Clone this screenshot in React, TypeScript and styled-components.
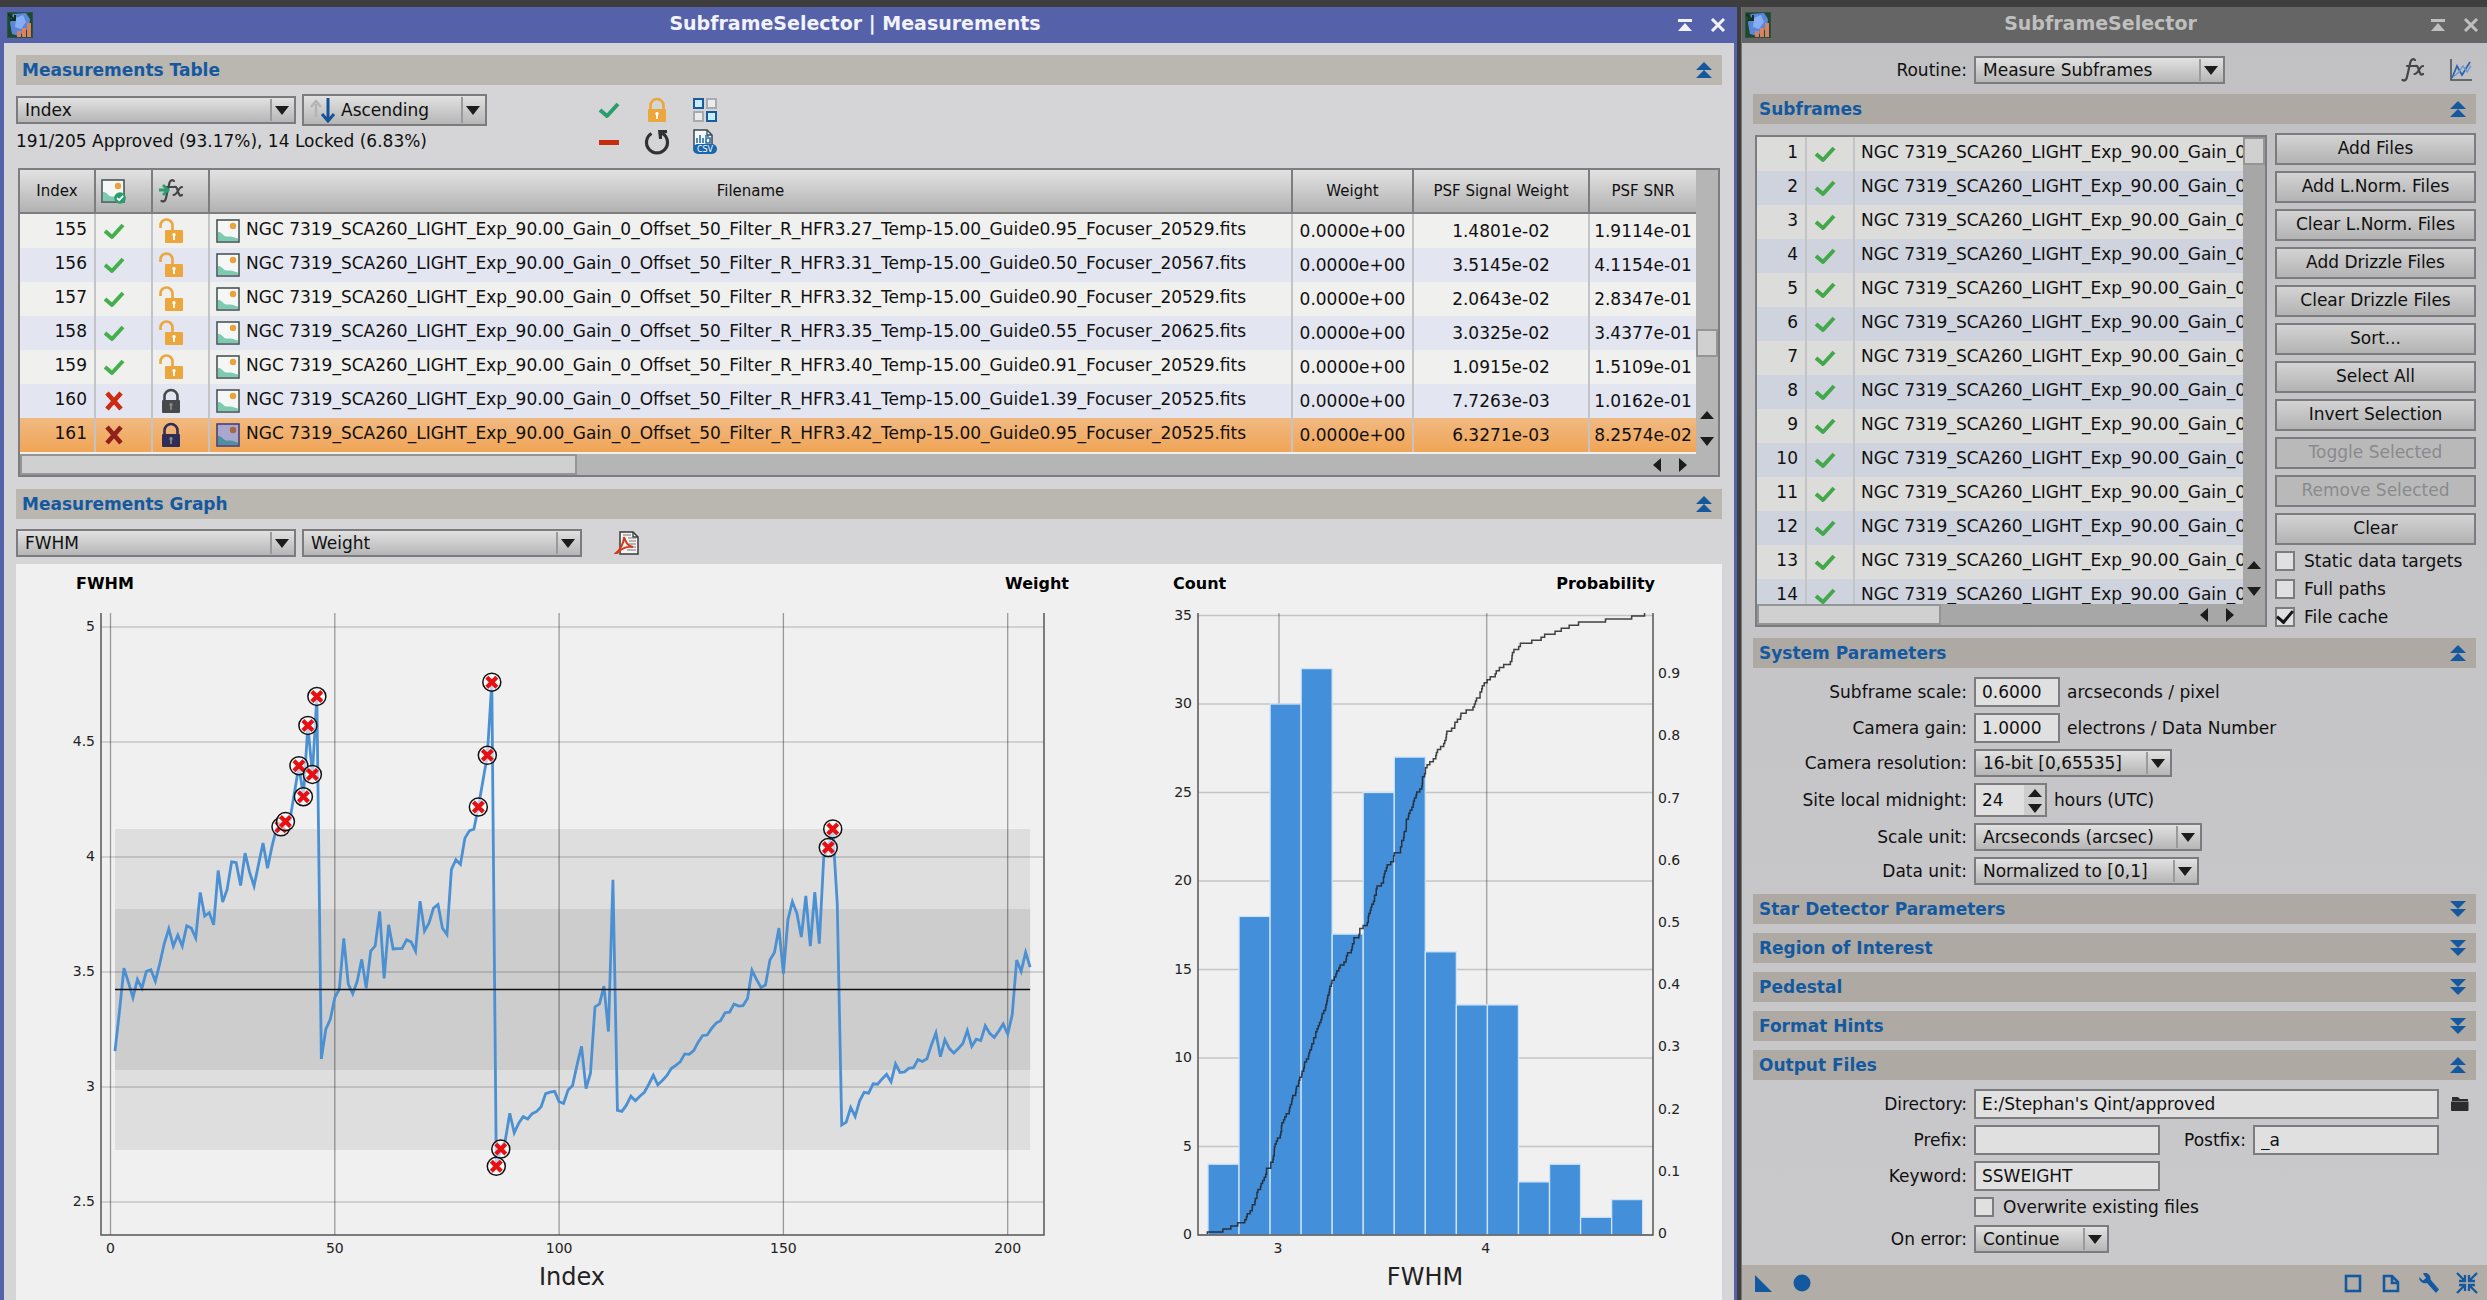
import React from 'react';
import styled, { createGlobalStyle, css } from 'styled-components';

const GlobalStyle = createGlobalStyle`
  * { box-sizing: border-box; }
  body {
    margin: 0;
    background: #3e3e3e;
    color: #101010;
    font-family: "DejaVu Sans", Verdana, sans-serif;
    font-size: 17px;
    line-height: 20px;
  }
  button, input, select { font: inherit; color: inherit; margin: 0; }
  button { cursor: pointer; }
`;

/* ---------- data ---------- */

const MEASUREMENTS = [
  { index: 155, name: 'HFR3.27_Temp-15.00_Guide0.95_Focuser_20529', signal: '1.4801e-02', snr: '1.9114e-01', ok: true },
  { index: 156, name: 'HFR3.31_Temp-15.00_Guide0.50_Focuser_20567', signal: '3.5145e-02', snr: '4.1154e-01', ok: true },
  { index: 157, name: 'HFR3.32_Temp-15.00_Guide0.90_Focuser_20529', signal: '2.0643e-02', snr: '2.8347e-01', ok: true },
  { index: 158, name: 'HFR3.35_Temp-15.00_Guide0.55_Focuser_20625', signal: '3.0325e-02', snr: '3.4377e-01', ok: true },
  { index: 159, name: 'HFR3.40_Temp-15.00_Guide0.91_Focuser_20529', signal: '1.0915e-02', snr: '1.5109e-01', ok: true },
  { index: 160, name: 'HFR3.41_Temp-15.00_Guide1.39_Focuser_20525', signal: '7.7263e-03', snr: '1.0162e-01', ok: false },
  { index: 161, name: 'HFR3.42_Temp-15.00_Guide0.95_Focuser_20525', signal: '6.3271e-03', snr: '8.2574e-02', ok: false, selected: true },
];

const PREFIX = 'NGC 7319_SCA260_LIGHT_Exp_90.00_Gain_0_Offset_50_Filter_R_';

const FWHM = [
  3.156, 3.33, 3.517, 3.455, 3.389, 3.468, 3.43, 3.503, 3.51, 3.46, 3.538, 3.625, 3.688, 3.613, 3.66,
  3.613, 3.701, 3.691, 3.648, 3.846, 3.743, 3.758, 3.705, 3.941, 3.804, 3.859, 3.979, 3.976, 3.876, 4.017,
  3.934, 3.874, 3.968, 4.061, 3.951, 4.046, 4.124, 4.131, 4.154, 4.162, 4.279, 4.397, 4.262, 4.572, 4.359,
  4.698, 3.122, 3.252, 3.294, 3.389, 3.425, 3.646, 3.447, 3.405, 3.46, 3.555, 3.43, 3.591, 3.613, 3.763,
  3.472, 3.705, 3.6, 3.602, 3.603, 3.64, 3.631, 3.591, 3.808, 3.678, 3.713, 3.778, 3.793, 3.69, 3.663,
  3.946, 3.988, 3.968, 4.082, 4.114, 4.121, 4.217, 4.329, 4.442, 4.76, 2.655, 2.73, 2.768, 2.886, 2.801,
  2.843, 2.871, 2.861, 2.884, 2.894, 2.914, 2.971, 2.978, 2.981, 2.936, 2.929, 2.987, 3.006, 3.096, 3.177,
  2.993, 3.061, 3.348, 3.361, 3.439, 3.241, 3.901, 2.898, 2.894, 2.921, 2.96, 2.94, 2.96, 2.977, 3.012,
  3.051, 3.009, 3.028, 3.049, 3.08, 3.094, 3.109, 3.144, 3.142, 3.158, 3.195, 3.224, 3.226, 3.255, 3.278,
  3.288, 3.323, 3.325, 3.361, 3.352, 3.354, 3.385, 3.507, 3.468, 3.433, 3.443, 3.552, 3.585, 3.691, 3.493,
  3.726, 3.806, 3.755, 3.652, 3.831, 3.612, 3.847, 3.623, 4.002, 4.041, 4.122, 3.798, 2.835, 2.847, 2.911,
  2.872, 2.94, 2.977, 2.973, 3.014, 3.012, 3.035, 3.055, 3.022, 3.1, 3.063, 3.066, 3.082, 3.084, 3.119,
  3.111, 3.123, 3.183, 3.235, 3.132, 3.206, 3.167, 3.148, 3.167, 3.189, 3.245, 3.177, 3.208, 3.202, 3.266,
  3.233, 3.216, 3.243, 3.274, 3.23, 3.313, 3.552, 3.503, 3.585, 3.521,
];

const REJECTED = [38, 39, 42, 43, 44, 45, 46, 82, 84, 85, 86, 87, 160, 161];
const HISTOGRAM = [4, 18, 30, 32, 17, 25, 27, 16, 13, 13, 3, 4, 1, 2];

const BLUE = '#1459a0';

/* ---------- icons ---------- */

const ProcessIcon = () => (
  <svg width="26" height="26" viewBox="0 0 26 26" aria-hidden="true">
    <rect width="26" height="26" fill="#1d4a2a" />
    <path d="M6 2 L19 1 L23 7 L22 16 L12 24 L5 22 L3 11Z" fill="#5b86dc" />
    <path d="M9 6 L16 3 L19 10 L14 17 L8 15Z" fill="#86aef2" />
    <path d="M1 2 L8 8 M8 3 V8 H3" stroke="#12301c" strokeWidth="2" fill="none" />
    <path d="M10 25v-6h4v6zM15 25V16h4v9zM20 25V11h4v14z" fill="#d9825f" />
    <rect x=".5" y=".5" width="25" height="25" fill="none" stroke="#2d4f4a" />
  </svg>
);

const ShadeIcon = () => (
  <svg width="16" height="14" viewBox="0 0 16 14" aria-hidden="true">
    <path d="M1 1h14v3H1zM8 5l7 8H1z" fill="currentColor" />
  </svg>
);

const CloseIcon = () => (
  <svg width="16" height="14" viewBox="0 0 16 14" aria-hidden="true">
    <path d="M2 1l12 12M14 1L2 13" stroke="currentColor" strokeWidth="3" />
  </svg>
);

const Chevrons = ({ up }: { up: boolean }) => (
  <svg width="18" height="18" viewBox="0 0 18 18" aria-hidden="true">
    <path d={up ? 'M9 1l8 8H1zM9 9l8 8H1z' : 'M9 17l8-8H1zM9 9l8-8H1z'} fill={BLUE} />
  </svg>
);

const Triangle = ({ dir }: { dir: 'up' | 'down' | 'left' | 'right' }) => {
  const d = {
    up: 'M8 4l7 8H1z',
    down: 'M8 13l7-9H1z',
    left: 'M4 8l8-7v14z',
    right: 'M12 8L4 1v14z',
  }[dir];
  return (
    <svg width="16" height="16" viewBox="0 0 16 16" aria-hidden="true">
      <path d={d} fill="#1c1c1c" />
    </svg>
  );
};

const CheckMark = ({ color }: { color: string }) => (
  <svg width="24" height="24" viewBox="0 0 24 24" aria-hidden="true">
    <path d="M3 12l7 6L21 6" fill="none" stroke={color} strokeWidth="4" strokeLinejoin="round" />
  </svg>
);

const CrossMark = ({ dark }: { dark?: boolean }) => (
  <svg width="24" height="24" viewBox="0 0 24 24" aria-hidden="true">
    <path d="M5 4l14 16M19 4L5 20" fill="none" stroke={dark ? '#93201c' : '#cc2a12'} strokeWidth="4.6" />
  </svg>
);

const Lock = ({ color, open, hole }: { color: string; open?: boolean; hole: string }) => (
  <svg width="26" height="26" viewBox="0 0 26 26" aria-hidden="true">
    {open ? (
      <>
        <path d="M2.5 10V7.5a6 6 0 0 1 12 0V14" fill="none" stroke={color} strokeWidth="2.6" />
        <rect x="7" y="12" width="18" height="13" rx="1" fill={color} />
        <path d="M16 15a1.8 1.8 0 0 1 .9 3.3V22h-1.8v-3.7A1.8 1.8 0 0 1 16 15z" fill={hole} />
      </>
    ) : (
      <>
        <path d="M6.5 13V8.5a6.5 6.5 0 0 1 13 0V13" fill="none" stroke={color} strokeWidth="2.6" />
        <rect x="4" y="12" width="18" height="13" rx="1" fill={color} />
        <path d="M13 15a1.8 1.8 0 0 1 .9 3.3V22h-1.8v-3.7A1.8 1.8 0 0 1 13 15z" fill={hole} />
      </>
    )}
  </svg>
);

const ImageIcon = ({ dark, badge }: { dark?: boolean; badge?: boolean }) => (
  <svg width="26" height="26" viewBox="0 0 26 26" aria-hidden="true">
    <rect x="2" y="2" width="22" height="22" fill={dark ? '#a9a6cf' : '#f4f7f6'} stroke={dark ? '#454078' : '#4a5558'} strokeWidth="1.6" />
    <path d="M3 14c4-1 5 5 10 4.5s6 1 10 2V23H3z" fill={dark ? '#4f8f9f' : '#7ccbb0'} />
    <circle cx="18" cy="8" r="3.2" fill={dark ? '#a8683c' : '#e9a33a'} />
    {badge && (
      <>
        <circle cx="20" cy="20" r="5.8" fill="#2a9d6f" />
        <path d="M17 20l2.2 2.2 4-4.4" fill="none" stroke="#fff" strokeWidth="1.8" />
      </>
    )}
  </svg>
);

const FxIcon = ({ arrow }: { arrow?: boolean }) => (
  <svg width="26" height="26" viewBox="0 0 26 26" aria-hidden="true">
    <g fill="none" stroke="#454545" strokeWidth="2.2" strokeLinecap="round">
      <path d="M15 3c-2-1.6-4-.6-4.6 2L7 20c-.6 3-2.5 4-4.5 3" />
      <path d="M7 9h7" />
      <path d="M15 9c2.500-.8 3 1 4 4.500s2 5 4 3.500M23 9c-3-.5-5 8.500-8.500 8" />
    </g>
    {arrow && <path d="M0 12h8M4 7l5 5-5 5" fill="none" stroke="#2a9d6f" strokeWidth="2.8" />}
  </svg>
);

const GridIcon = () => (
  <svg width="26" height="26" viewBox="0 0 26 26" aria-hidden="true">
    <g strokeWidth="2">
      <rect x="2" y="2" width="9" height="9" fill="#c8ecff" stroke="#1a5b9c" />
      <rect x="15" y="2" width="9" height="9" fill="#ececec" stroke="#a8abae" />
      <rect x="2" y="15" width="9" height="9" fill="#ececec" stroke="#a8abae" />
      <rect x="15" y="15" width="9" height="9" fill="#c8ecff" stroke="#1a5b9c" />
    </g>
  </svg>
);

const MinusIcon = () => (
  <svg width="26" height="26" viewBox="0 0 26 26" aria-hidden="true">
    <rect x="3" y="11" width="20" height="5" fill="#c42d10" />
  </svg>
);

const ResetIcon = () => (
  <svg width="26" height="26" viewBox="0 0 26 26" aria-hidden="true">
    <path d="M7.5 4.5A10.5 10.5 0 1 0 18.5 4.5" fill="none" stroke="#2f3133" strokeWidth="3.2" />
    <path d="M14 1h9v3l-5 1v5h-3z" fill="#2f3133" />
  </svg>
);

const CsvIcon = () => (
  <svg width="26" height="26" viewBox="0 0 26 26" aria-hidden="true">
    <path d="M2 1h13l5 5v12H2z" fill="#f6f8fa" stroke="#3d474f" strokeWidth="1.5" />
    <path d="M15 1v5h5" fill="none" stroke="#3d474f" strokeWidth="1.3" />
    <path d="M5 9v5M8 6v8M11 9v5M14 9h4v5h-4zM13 7h4" stroke="#2a6cb4" strokeWidth="1.6" fill="none" />
    <rect x="1" y="15" width="24" height="10" rx="5" fill="#1a66ac" />
    <text x="13" y="23" textAnchor="middle" fontSize="8" fill="#fff">CSV</text>
  </svg>
);

const PdfIcon = () => (
  <svg width="26" height="26" viewBox="0 0 26 26" aria-hidden="true">
    <path d="M6 2h13l5 5v17H6z" fill="#f4f4f4" stroke="#3a3a3a" strokeWidth="1.5" />
    <path d="M19 2v5h5" fill="none" stroke="#3a3a3a" strokeWidth="1.3" />
    <path d="M14 8h8M15 11h7M15 14h7M13 20h9M9 5h8M17 17h5" stroke="#777" strokeWidth="1.2" />
    <path d="M2 23c4-3 8-10 8-16 2 5 3 9 9 10-6-1-11 1-16 6z" fill="none" stroke="#d23a20" strokeWidth="2" />
  </svg>
);

const SortIcon = () => (
  <svg width="26" height="26" viewBox="0 0 26 26" aria-hidden="true">
    <path d="M6 20V7M1 10l5-6 5 6" fill="none" stroke="#b3b3b3" strokeWidth="2.4" />
    <path d="M18 1v22M12 17l6 7 6-7" fill="none" stroke="#14529a" strokeWidth="3" />
  </svg>
);

const PlotIcon = () => (
  <svg width="26" height="26" viewBox="0 0 26 26" aria-hidden="true">
    <path d="M3 2v21h21" fill="none" stroke="#454c52" strokeWidth="1.5" />
    <path d="M4 21l5-12 5 9 8-13" fill="none" stroke="#2a62ac" strokeWidth="1.7" />
    <path d="M5 20l6-5 4-6 4 6 4-6" fill="none" stroke="#6f9bd4" strokeWidth="1.4" />
  </svg>
);

const FolderIcon = () => (
  <svg width="20" height="20" viewBox="0 0 20 20" aria-hidden="true">
    <path d="M2 3h6l2 2h8v2H2zM1 7.5h17.5V16a1 1 0 0 1-1 1h-15.5a1 1 0 0 1-1-1z" fill="#2c2c2e" />
  </svg>
);

const FooterIcon = ({ kind }: { kind: string }) => (
  <svg width="22" height="22" viewBox="0 0 22 22" aria-hidden="true">
    {kind === 'instance' && <path d="M2 3v17h17z" fill={BLUE} />}
    {kind === 'apply' && <circle cx="11" cy="11" r="8.5" fill={BLUE} />}
    {kind === 'square' && <rect x="4" y="4" width="14" height="15" fill="none" stroke={BLUE} strokeWidth="2.6" />}
    {kind === 'page' && (
      <path d="M4 4h8l6 6v9H4zM12 4v7h6" fill="none" stroke={BLUE} strokeWidth="2.6" />
    )}
    {kind === 'wrench' && (
      <path d="M1 5l4 3.5L8 6 5 1.5c4-1.5 8 1 7.5 6L21 17.5 18 21 9 11c-4 1.5-8-2-8-6z" fill={BLUE} />
    )}
    {kind === 'collapse' && (
      <path
        d="M1 1l7 7M21 1l-7 7M1 21l7-7M21 21l-7-7M3 9h6V3M19 9h-6V3M3 13h6v6M19 13h-6v6"
        fill="none"
        stroke={BLUE}
        strokeWidth="2.3"
      />
    )}
  </svg>
);

/* ---------- window chrome ---------- */

const Desktop = styled.div`
  display: flex;
  gap: 4px;
  min-height: 100vh;
  padding-top: 7px;
  background: #3e3e3e;
`;

const Window = styled.section<{ $active?: boolean }>`
  display: flex;
  flex-direction: column;
  min-width: 0;
  ${(p) =>
    p.$active
      ? css`
          flex: 1;
          background: #d5d5d7;
          border: solid #5561a9;
          border-width: 0 3px 0 4px;
        `
      : css`
          flex: 0 0 746px;
          background: linear-gradient(#c1c1c4, #c9c9cb);
          border-left: 1px solid #77777a;
        `}
`;

const TitleBar = styled.header<{ $active?: boolean }>`
  display: flex;
  align-items: center;
  height: 36px;
  padding: 0 8px 0 3px;
  gap: 17px;
  background: ${(p) => (p.$active ? '#5561a9' : '#656565')};
  color: ${(p) => (p.$active ? '#f2f3fa' : '#bfbfbf')};
`;

const Title = styled.h1`
  flex: 1;
  margin: 0;
  padding-bottom: 4px;
  text-align: center;
  font-size: 19px;
  line-height: 20px;
  font-weight: bold;
`;

const PlainButton = styled.button`
  display: flex;
  align-items: center;
  justify-content: center;
  padding: 0;
  border: 0;
  background: none;
`;

const WindowBody = styled.div<{ $side?: boolean }>`
  display: flex;
  flex: 1;
  flex-direction: column;
  gap: ${(p) => (p.$side ? 9 : 10)}px;
  padding: ${(p) => (p.$side ? '13px 11px 12px' : '12px 12px 0')};
`;

const SectionBar = styled.div<{ $side?: boolean }>`
  display: flex;
  align-items: center;
  justify-content: space-between;
  height: 30px;
  padding: 0 9px 0 6px;
  background: ${(p) => (p.$side ? '#aeaaa3' : '#bab6b0')};
`;

const SectionTitle = styled.h2`
  margin: 0;
  color: ${BLUE};
  font-size: 17px;
  line-height: 20px;
  font-weight: bold;
`;

const Section = ({ title, open = true, side }: { title: string; open?: boolean; side?: boolean }) => (
  <SectionBar $side={side}>
    <SectionTitle>{title}</SectionTitle>
    <PlainButton type="button" aria-label={`Toggle ${title}`}>
      <Chevrons up={open} />
    </PlainButton>
  </SectionBar>
);

/* ---------- controls ---------- */

const SelectBox = styled.div<{ $width: number; $tall?: boolean }>`
  display: grid;
  grid-template-columns: 34px 1fr 24px;
  align-items: center;
  width: ${(p) => p.$width}px;
  height: ${(p) => (p.$tall ? 32 : 28)}px;
  border: 2px solid #7c7c7e;
  background: linear-gradient(rgba(255, 255, 255, 0.38), rgba(0, 0, 0, 0.12)), #cfcfcf;
`;

const NativeSelect = styled.select<{ $icon?: boolean }>`
  grid-area: 1 / 1 / 2 / 4;
  width: 100%;
  height: 100%;
  padding: 0 24px 0 ${(p) => (p.$icon ? 37 : 7)}px;
  border: 0;
  background: none;
  appearance: none;
`;

const SelectIcon = styled.span`
  display: flex;
  grid-area: 1 / 1 / 2 / 2;
  padding-left: 6px;
  pointer-events: none;
`;

const SelectArrow = styled.span`
  display: flex;
  grid-area: 1 / 3 / 2 / 4;
  align-self: stretch;
  align-items: center;
  margin: 1px 0;
  padding-left: 2px;
  border-left: 2px solid #9a9a9c;
  pointer-events: none;
`;

const Select = (props: { id?: string; label?: string; value: string; width: number; icon?: React.ReactNode }) => (
  <SelectBox $width={props.width} $tall={!!props.icon}>
    <NativeSelect id={props.id} aria-label={props.label} $icon={!!props.icon} defaultValue={props.value}>
      <option>{props.value}</option>
    </NativeSelect>
    {props.icon && <SelectIcon>{props.icon}</SelectIcon>}
    <SelectArrow>
      <Triangle dir="down" />
    </SelectArrow>
  </SelectBox>
);

const TextInput = styled.input<{ $width?: number }>`
  width: ${(p) => (p.$width ? `${p.$width}px` : 'auto')};
  flex: ${(p) => (p.$width ? 'none' : '1')};
  min-width: 0;
  height: 30px;
  padding: 0 6px;
  border: 2px solid #7c7c7e;
  background: #e0e0e0;
`;

const Spin = styled.div`
  display: grid;
  grid-template-columns: 1fr 21px;
  width: 73px;
  height: 34px;
  border: 2px solid #7c7c7e;
`;

const SpinInput = styled.input`
  grid-row: 1 / 3;
  min-width: 0;
  width: 100%;
  padding: 0 6px;
  border: 0;
  background: #e0e0e0;
  appearance: textfield;
  &::-webkit-inner-spin-button { appearance: none; margin: 0; }
`;

const SpinButton = styled(PlainButton)`
  height: 15px;
  overflow: hidden;
  background: #cdcdcd;
`;

const CheckLabel = styled.label`
  display: flex;
  align-items: center;
  gap: 9px;
  height: 20px;
`;

const CheckInput = styled.input`
  display: grid;
  place-content: center;
  width: 20px;
  height: 20px;
  border: 2px solid #7c7c7e;
  background: #e0e0e0;
  appearance: none;
  &:checked::after {
    content: '';
    width: 7px;
    height: 13px;
    margin-bottom: 4px;
    border: solid #151515;
    border-width: 0 3px 3px 0;
    transform: rotate(40deg);
  }
`;

const CheckBox = ({ text, checked }: { text: string; checked?: boolean }) => (
  <CheckLabel>
    <CheckInput type="checkbox" defaultChecked={checked} />
    {text}
  </CheckLabel>
);

const PushButton = styled.button`
  height: 32px;
  padding: 0 0 2px;
  border: 2px solid #7c7c7e;
  background: linear-gradient(#d3d3d3, #b3b3b3);
  &:disabled { background: #b9b9ba; color: #8a8a8c; }
`;

/* ---------- scroll areas ---------- */

const ScrollFrame = styled.div<{ $side?: boolean }>`
  display: grid;
  grid-template-columns: minmax(0, 1fr) 22px;
  grid-template-rows: minmax(0, 1fr) 21px;
  border: 2px solid #7d7d7f;
  background: ${(p) => (p.$side ? '#a7a7a8' : '#b5b5b5')};
  ${(p) =>
    p.$side
      ? css`
          flex: 1;
          min-width: 0;
          height: 492px;
          margin: 2px 0;
        `
      : css`
          height: 309px;
          margin: 0 2px 2px;
        `}
`;

const ScrollView = styled.div`
  overflow: hidden;
  background: #f0f0ef;
`;

const VScroll = styled.div`
  display: flex;
  flex-direction: column;
  align-items: center;
  justify-content: flex-end;
  gap: 10px;
  padding-bottom: 5px;
`;

const VThumb = styled.div<{ $bottom: number }>`
  flex: none;
  width: 22px;
  height: 28px;
  margin-bottom: ${(p) => p.$bottom}px;
  border: 2px solid #949595;
  background: #d0d0d1;
`;

const HScroll = styled.div`
  display: flex;
  align-items: center;
  gap: 10px;
  padding-right: 5px;
`;

const HThumb = styled.div<{ $width: number }>`
  align-self: stretch;
  width: ${(p) => p.$width}px;
  margin-right: auto;
  border: 2px solid #949595;
  background: #d0d0d1;
`;

const Table = styled.table`
  width: 100%;
  table-layout: fixed;
  border-collapse: separate;
  border-spacing: 0;
`;

const HeadCell = styled.th<{ $width?: number }>`
  width: ${(p) => (p.$width ? `${p.$width}px` : 'auto')};
  height: 44px;
  padding: 0;
  border: solid #7d7d7f;
  border-width: 0 2px 2px 0;
  background: linear-gradient(#e2e2e2, #b2b2b2);
  font-size: 15px;
  font-weight: normal;
  &:last-child { border-right: 0; }
`;

const Row = styled.tr<{ $selected?: boolean }>`
  background: #f0f0ef;
  &:nth-child(even) { background: #e3e6f0; }
  ${(p) => p.$selected && css`&& { background: linear-gradient(#f1b981, #f0a556); }`}
`;

const SideRow = styled.tr`
  background: #dcdcdb;
  &:nth-child(even) { background: #cfd3dd; }
`;

const Cell = styled.td<{ $align?: string; $raised?: boolean; $pad?: number; $width?: number }>`
  width: ${(p) => (p.$width ? `${p.$width}px` : 'auto')};
  height: 34px;
  padding: 0 ${(p) => p.$pad ?? 0}px ${(p) => (p.$raised ? 5 : 0)}px;
  border-right: 2px solid #c3c4c8;
  text-align: ${(p) => p.$align ?? 'left'};
  white-space: nowrap;
  &:last-child { border-right: 0; }
`;

const IconBox = styled.span<{ $left?: number }>`
  display: flex;
  align-items: center;
  padding-left: ${(p) => p.$left ?? 6}px;
`;

const FileCell = styled.span`
  display: flex;
  align-items: center;
  gap: 5px;
  padding-left: 5px;
`;

const FileName = styled.span`
  padding-bottom: 5px;
`;

/* ---------- toolbars ---------- */

const Toolbar = styled.div`
  display: flex;
  align-items: center;
  gap: 6px;
`;

const TableTools = styled.div`
  display: grid;
  grid-template-columns: 558px 26px 26px 26px;
  grid-template-rows: 30px 33px;
  column-gap: 22px;
  align-items: center;
  justify-content: start;
`;

const Status = styled.div`
  padding-bottom: 2px;
`;

const PdfButton = styled(PlainButton)`
  margin-left: 26px;
`;

const ChartArea = styled.div`
  display: grid;
  flex: 1;
  grid-template-columns: 1092fr 614fr;
  align-items: start;
  margin-top: -3px;
  background: #f0f0f0;
`;

const ChartSvg = styled.svg`
  display: block;
  width: 100%;
  height: auto;
  font-size: 14px;
  fill: #222;
`;

/* ---------- charts ---------- */

const lx = (i: number) => 94.5 + 4.486 * i;
const ly = (v: number) => 293 - (v - 4) * 230;

const LineChart = () => (
  <ChartSvg viewBox="0 0 1092 736" role="img" aria-label="FWHM by index">
    <rect x={lx(1)} y="265" width={lx(205) - lx(1)} height="321" fill="#dedede" />
    <rect x={lx(1)} y="345" width={lx(205) - lx(1)} height="161" fill="#cdcdcd" />
    {[5, 4.5, 4, 3.5, 3, 2.5].map((v) => (
      <g key={v}>
        <path d={`M85 ${ly(v)}H1028`} stroke="#000" strokeOpacity=".18" strokeWidth="1.5" />
        <text x="79" y={ly(v) + 4} textAnchor="end">{v}</text>
      </g>
    ))}
    {[0, 50, 100, 150, 200].map((i) => (
      <g key={i}>
        <path d={`M${lx(i)} 49V671`} stroke="#000" strokeOpacity=".36" strokeWidth="1.3" />
        <text x={lx(i)} y="689" textAnchor="middle">{i}</text>
      </g>
    ))}
    <path d="M85 49V671H1028V49" fill="none" stroke="#555" strokeWidth="1.5" />
    <polyline
      points={FWHM.map((v, i) => `${lx(i + 1)},${ly(v)}`).join(' ')}
      fill="none"
      stroke="#4a90d3"
      strokeWidth="2.8"
    />
    <path d={`M${lx(1)} 425.5H${lx(205)}`} stroke="#111" strokeWidth="1.6" />
    {REJECTED.map((i) => (
      <g key={i} transform={`translate(${lx(i)} ${ly(FWHM[i - 1])})`}>
        <circle r="9" fill="#fff" fillOpacity=".6" stroke="#111" strokeWidth="1.5" />
        <path d="M-5-5L5 5M5-5L-5 5" stroke="#e80f12" strokeWidth="4.2" />
      </g>
    ))}
    <g fontSize="16" fontWeight="bold" fill="#000">
      <text x="60" y="25">FWHM</text>
      <text x="1053" y="25" textAnchor="end">Weight</text>
    </g>
    <text x="556" y="721" textAnchor="middle" fontSize="24">Index</text>
  </ChartSvg>
);

const hx = (v: number) => 171 + (v - 3) * 207.7;
const hy = (count: number) => 671 - count * 17.7;

const cumulative = () => {
  const sorted = [...FWHM].sort((a, b) => a - b);
  let path = `M${hx(sorted[0])} 670`;
  sorted.forEach((v, i) => {
    path += `H${hx(v)}V${671 - (622 * (i + 1)) / sorted.length}`;
  });
  return path;
};

const Histogram = () => (
  <ChartSvg viewBox="0 0 614 736" role="img" aria-label="FWHM distribution">
    {[0, 5, 10, 15, 20, 25, 30, 35].map((c) => (
      <g key={c}>
        <path d={`M90 ${hy(c)}H545`} stroke="#000" strokeOpacity=".18" strokeWidth="1.5" />
        <text x="84" y={hy(c) + 4} textAnchor="end">{c}</text>
      </g>
    ))}
    {[3, 4].map((v) => (
      <g key={v}>
        <path d={`M${hx(v)} 49V671`} stroke="#000" strokeOpacity=".3" strokeWidth="1.5" />
        <text x={hx(v) - 1} y="689" textAnchor="middle">{v}</text>
      </g>
    ))}
    {HISTOGRAM.map((c, i) => (
      <rect
        key={i}
        x={100 + i * 31.05}
        y={hy(c)}
        width="31"
        height={c * 17.7}
        fill="#448fda"
        stroke="#cfe3f7"
        strokeWidth="1.3"
      />
    ))}
    {[0, 1, 2, 3, 4, 5, 6, 7, 8, 9].map((p) => (
      <text key={p} x="550" y={674 - p * 62.2}>{p / 10}</text>
    ))}
    <path d="M90 49V671H545V49" fill="none" stroke="#555" strokeWidth="1.5" />
    <path d={cumulative()} fill="none" stroke="#222" strokeOpacity=".85" strokeWidth="1.5" />
    <g fontSize="16" fontWeight="bold" fill="#000">
      <text x="65" y="25">Count</text>
      <text x="547" y="25" textAnchor="end">Probability</text>
    </g>
    <text x="317" y="721" textAnchor="middle" fontSize="24">FWHM</text>
  </ChartSvg>
);

/* ---------- side panel ---------- */

const SideForm = styled.div`
  display: grid;
  grid-template-columns: 214px minmax(0, 1fr);
  gap: 6px 7px;
  align-items: center;
`;

const RoutineForm = styled(SideForm)`
  padding-bottom: 1px;
`;

const FieldLabel = styled.label`
  text-align: right;
  white-space: nowrap;
`;

const Field = styled.div`
  display: flex;
  align-items: center;
  gap: 7px;
`;

const CheckField = styled.div`
  grid-column: 2;
  margin-bottom: 2px;
`;

const RoutineTools = styled.div`
  display: flex;
  gap: 22px;
  margin: 0 2px 0 auto;
`;

const FolderButton = styled(PlainButton)`
  margin: 0 6px 0 4px;
`;

const PostfixLabel = styled(FieldLabel)`
  margin-left: 17px;
`;

const SubframeArea = styled.div`
  display: flex;
  gap: 8px;
  padding-left: 2px;
`;

const ButtonColumn = styled.div`
  display: flex;
  flex: 0 0 201px;
  flex-direction: column;
  gap: 6px;
`;

const CheckList = styled.div`
  display: flex;
  flex-direction: column;
  gap: 8px;
`;

const Footer = styled.footer`
  display: flex;
  align-items: center;
  gap: 16px;
  height: 35px;
  padding: 0 9px 0 11px;
  background: #b2aea7;
`;

const FooterSpacer = styled.span`
  flex: 1;
`;

const SIDE_BUTTONS = [
  'Add Files', 'Add L.Norm. Files', 'Clear L.Norm. Files', 'Add Drizzle Files', 'Clear Drizzle Files',
  'Sort...', 'Select All', 'Invert Selection', 'Toggle Selected', 'Remove Selected', 'Clear',
];

const WindowTitle = ({ title, active }: { title: string; active?: boolean }) => (
  <TitleBar $active={active}>
    <ProcessIcon />
    <Title>{title}</Title>
    <PlainButton type="button" aria-label="Shade window"><ShadeIcon /></PlainButton>
    <PlainButton type="button" aria-label="Close window"><CloseIcon /></PlainButton>
  </TitleBar>
);

const MeasurementsTable = () => (
  <ScrollFrame>
    <ScrollView>
      <Table>
        <thead>
          <tr>
            <HeadCell $width={76}>Index</HeadCell>
            <HeadCell $width={57} aria-label="Approved"><IconBox $left={4}><ImageIcon badge /></IconBox></HeadCell>
            <HeadCell $width={57} aria-label="Locked"><IconBox $left={6}><FxIcon arrow /></IconBox></HeadCell>
            <HeadCell>Filename</HeadCell>
            <HeadCell $width={121}>Weight</HeadCell>
            <HeadCell $width={176}>PSF Signal Weight</HeadCell>
            <HeadCell $width={106}>PSF SNR</HeadCell>
          </tr>
        </thead>
        <tbody>
          {MEASUREMENTS.map((m) => (
            <Row key={m.index} $selected={m.selected}>
              <Cell $align="right" $pad={7} $raised>{m.index}</Cell>
              <Cell><IconBox>{m.ok ? <CheckMark color="#45b04b" /> : <CrossMark dark={m.selected} />}</IconBox></Cell>
              <Cell>
                <IconBox $left={5}>
                  {m.ok
                    ? <Lock open color="#eba63c" hole="#fff" />
                    : <Lock color={m.selected ? '#302c58' : '#47494c'} hole="#85878a" />}
                </IconBox>
              </Cell>
              <Cell>
                <FileCell>
                  <ImageIcon dark={m.selected} />
                  <FileName>{PREFIX}{m.name}.fits</FileName>
                </FileCell>
              </Cell>
              <Cell $align="center">0.0000e+00</Cell>
              <Cell $align="center">{m.signal}</Cell>
              <Cell $align="center">{m.snr}</Cell>
            </Row>
          ))}
        </tbody>
      </Table>
    </ScrollView>
    <VScroll>
      <VThumb $bottom={40} />
      <Triangle dir="up" />
      <Triangle dir="down" />
    </VScroll>
    <HScroll>
      <HThumb $width={557} />
      <Triangle dir="left" />
      <Triangle dir="right" />
    </HScroll>
  </ScrollFrame>
);

const SubframeList = () => (
  <ScrollFrame $side>
    <ScrollView>
      <Table>
        <tbody>
          {Array.from({ length: 14 }, (_, i) => (
            <SideRow key={i}>
              <Cell $width={50} $align="right" $pad={7} $raised>{i + 1}</Cell>
              <Cell $width={48}><IconBox><CheckMark color="#43a84a" /></IconBox></Cell>
              <Cell $pad={6} $raised>{PREFIX}HFR</Cell>
            </SideRow>
          ))}
        </tbody>
      </Table>
    </ScrollView>
    <VScroll>
      <VThumb $bottom={382} />
      <Triangle dir="up" />
      <Triangle dir="down" />
    </VScroll>
    <HScroll>
      <HThumb $width={184} />
      <Triangle dir="left" />
      <Triangle dir="right" />
    </HScroll>
  </ScrollFrame>
);

export default function App() {
  return (
    <>
      <GlobalStyle />
      <Desktop>
        <Window $active>
          <WindowTitle title="SubframeSelector | Measurements" active />
          <WindowBody>
            <Section title="Measurements Table" />
            <TableTools>
              <Toolbar>
                <Select label="Sort by" value="Index" width={280} />
                <Select label="Sort order" value="Ascending" width={185} icon={<SortIcon />} />
              </Toolbar>
              <PlainButton type="button" aria-label="Approve"><CheckMark color="#2a9d6f" /></PlainButton>
              <PlainButton type="button" aria-label="Lock"><Lock color="#eba63c" hole="#fff" /></PlainButton>
              <PlainButton type="button" aria-label="Toggle columns"><GridIcon /></PlainButton>
              <Status>191/205 Approved (93.17%), 14 Locked (6.83%)</Status>
              <PlainButton type="button" aria-label="Reject"><MinusIcon /></PlainButton>
              <PlainButton type="button" aria-label="Reset"><ResetIcon /></PlainButton>
              <PlainButton type="button" aria-label="Export CSV"><CsvIcon /></PlainButton>
            </TableTools>
            <MeasurementsTable />
            <Section title="Measurements Graph" />
            <Toolbar>
              <Select label="Left axis" value="FWHM" width={280} />
              <Select label="Right axis" value="Weight" width={280} />
              <PdfButton type="button" aria-label="Export PDF"><PdfIcon /></PdfButton>
            </Toolbar>
            <ChartArea>
              <LineChart />
              <Histogram />
            </ChartArea>
          </WindowBody>
        </Window>

        <Window>
          <WindowTitle title="SubframeSelector" />
          <WindowBody $side>
            <RoutineForm>
              <FieldLabel htmlFor="routine">Routine:</FieldLabel>
              <Field>
                <Select id="routine" value="Measure Subframes" width={251} />
                <RoutineTools>
                  <PlainButton type="button" aria-label="Expressions"><FxIcon /></PlainButton>
                  <PlainButton type="button" aria-label="Plots"><PlotIcon /></PlainButton>
                </RoutineTools>
              </Field>
            </RoutineForm>

            <Section side title="Subframes" />
            <SubframeArea>
              <SubframeList />
              <ButtonColumn>
                {SIDE_BUTTONS.map((b) => (
                  <PushButton key={b} type="button" disabled={b.endsWith('Selected')}>{b}</PushButton>
                ))}
                <CheckList>
                  <CheckBox text="Static data targets" />
                  <CheckBox text="Full paths" />
                  <CheckBox text="File cache" checked />
                </CheckList>
              </ButtonColumn>
            </SubframeArea>

            <Section side title="System Parameters" />
            <SideForm>
              <FieldLabel htmlFor="scale">Subframe scale:</FieldLabel>
              <Field><TextInput id="scale" $width={86} defaultValue="0.6000" />arcseconds / pixel</Field>
              <FieldLabel htmlFor="gain">Camera gain:</FieldLabel>
              <Field><TextInput id="gain" $width={86} defaultValue="1.0000" />electrons / Data Number</Field>
              <FieldLabel htmlFor="resolution">Camera resolution:</FieldLabel>
              <Field><Select id="resolution" value="16-bit [0,65535]" width={198} /></Field>
              <FieldLabel htmlFor="midnight">Site local midnight:</FieldLabel>
              <Field>
                <Spin>
                  <SpinInput id="midnight" type="number" defaultValue={24} />
                  <SpinButton type="button" aria-label="Increase"><Triangle dir="up" /></SpinButton>
                  <SpinButton type="button" aria-label="Decrease"><Triangle dir="down" /></SpinButton>
                </Spin>
                hours (UTC)
              </Field>
              <FieldLabel htmlFor="scale-unit">Scale unit:</FieldLabel>
              <Field><Select id="scale-unit" value="Arcseconds (arcsec)" width={228} /></Field>
              <FieldLabel htmlFor="data-unit">Data unit:</FieldLabel>
              <Field><Select id="data-unit" value="Normalized to [0,1]" width={225} /></Field>
            </SideForm>

            <Section side title="Star Detector Parameters" open={false} />
            <Section side title="Region of Interest" open={false} />
            <Section side title="Pedestal" open={false} />
            <Section side title="Format Hints" open={false} />
            <Section side title="Output Files" />
            <SideForm>
              <FieldLabel htmlFor="directory">Directory:</FieldLabel>
              <Field>
                <TextInput id="directory" defaultValue="E:/Stephan's Qint/approved" />
                <FolderButton type="button" aria-label="Select directory"><FolderIcon /></FolderButton>
              </Field>
              <FieldLabel htmlFor="prefix">Prefix:</FieldLabel>
              <Field>
                <TextInput id="prefix" $width={186} />
                <PostfixLabel htmlFor="postfix">Postfix:</PostfixLabel>
                <TextInput id="postfix" $width={186} defaultValue="_a" />
              </Field>
              <FieldLabel htmlFor="keyword">Keyword:</FieldLabel>
              <Field><TextInput id="keyword" $width={186} defaultValue="SSWEIGHT" /></Field>
              <CheckField><CheckBox text="Overwrite existing files" /></CheckField>
              <FieldLabel htmlFor="on-error">On error:</FieldLabel>
              <Field><Select id="on-error" value="Continue" width={135} /></Field>
            </SideForm>
          </WindowBody>
          <Footer>
            <PlainButton type="button" aria-label="New instance"><FooterIcon kind="instance" /></PlainButton>
            <PlainButton type="button" aria-label="Apply global"><FooterIcon kind="apply" /></PlainButton>
            <FooterSpacer />
            <PlainButton type="button" aria-label="Edit source"><FooterIcon kind="square" /></PlainButton>
            <PlainButton type="button" aria-label="Documentation"><FooterIcon kind="page" /></PlainButton>
            <PlainButton type="button" aria-label="Preferences"><FooterIcon kind="wrench" /></PlainButton>
            <PlainButton type="button" aria-label="Reset"><FooterIcon kind="collapse" /></PlainButton>
          </Footer>
        </Window>
      </Desktop>
    </>
  );
}
